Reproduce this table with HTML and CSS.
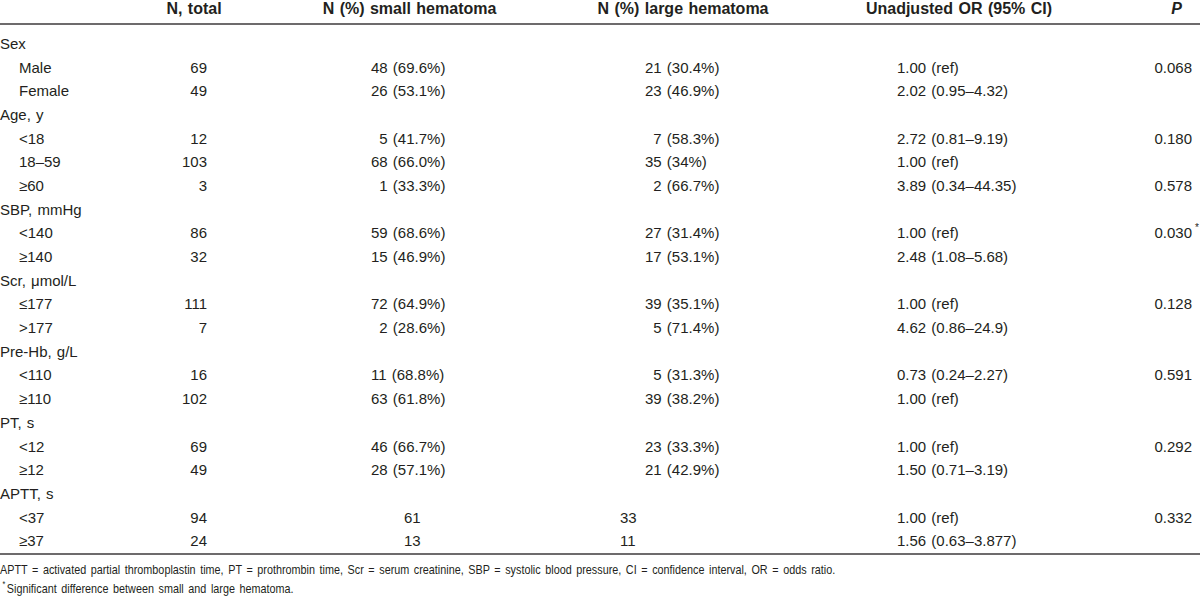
FILE: index.html
```html
<!DOCTYPE html>
<html>
<head>
<meta charset="utf-8">
<link rel="stylesheet" href="styles.css">
</head>
<body>
<table class="tbl">
  <colgroup>
    <col class="w1"><col class="w2"><col class="w3"><col class="w4"><col class="w5"><col class="w6">
  </colgroup>
  <thead>
    <tr>
      <th class="h1"></th>
      <th class="hc">N, total</th>
      <th class="hc">N (%) small hematoma</th>
      <th class="hc">N (%) large hematoma</th>
      <th class="hc">Unadjusted OR (95% CI)</th>
      <th class="hp"><i>P</i></th>
    </tr>
  </thead>
  <tbody>
    <tr class="first"><td class="lab">Sex</td><td></td><td></td><td></td><td></td><td></td></tr>
    <tr><td class="sub">Male</td><td class="n">69</td><td class="s">48 (69.6%)</td><td class="l">21 (30.4%)</td><td class="o">1.00 (ref)</td><td class="p">0.068</td></tr>
    <tr><td class="sub">Female</td><td class="n">49</td><td class="s">26 (53.1%)</td><td class="l">23 (46.9%)</td><td class="o">2.02 (0.95–4.32)</td><td class="p"></td></tr>
    <tr><td class="lab">Age, y</td><td></td><td></td><td></td><td></td><td></td></tr>
    <tr><td class="sub">&lt;18</td><td class="n">12</td><td class="s">&#8199;5 (41.7%)</td><td class="l">&#8199;7 (58.3%)</td><td class="o">2.72 (0.81–9.19)</td><td class="p">0.180</td></tr>
    <tr><td class="sub">18–59</td><td class="n">103</td><td class="s">68 (66.0%)</td><td class="l">35 (34%)</td><td class="o">1.00 (ref)</td><td class="p"></td></tr>
    <tr><td class="sub">≥60</td><td class="n">3</td><td class="s">&#8199;1 (33.3%)</td><td class="l">&#8199;2 (66.7%)</td><td class="o">3.89 (0.34–44.35)</td><td class="p">0.578</td></tr>
    <tr><td class="lab">SBP, mmHg</td><td></td><td></td><td></td><td></td><td></td></tr>
    <tr><td class="sub">&lt;140</td><td class="n">86</td><td class="s">59 (68.6%)</td><td class="l">27 (31.4%)</td><td class="o">1.00 (ref)</td><td class="p">0.030<sup class="star">*</sup></td></tr>
    <tr><td class="sub">≥140</td><td class="n">32</td><td class="s">15 (46.9%)</td><td class="l">17 (53.1%)</td><td class="o">2.48 (1.08–5.68)</td><td class="p"></td></tr>
    <tr><td class="lab">Scr, μmol/L</td><td></td><td></td><td></td><td></td><td></td></tr>
    <tr><td class="sub">≤177</td><td class="n">111</td><td class="s">72 (64.9%)</td><td class="l">39 (35.1%)</td><td class="o">1.00 (ref)</td><td class="p">0.128</td></tr>
    <tr><td class="sub">&gt;177</td><td class="n">7</td><td class="s">&#8199;2 (28.6%)</td><td class="l">&#8199;5 (71.4%)</td><td class="o">4.62 (0.86–24.9)</td><td class="p"></td></tr>
    <tr><td class="lab">Pre-Hb, g/L</td><td></td><td></td><td></td><td></td><td></td></tr>
    <tr><td class="sub">&lt;110</td><td class="n">16</td><td class="s">11 (68.8%)</td><td class="l">&#8199;5 (31.3%)</td><td class="o">0.73 (0.24–2.27)</td><td class="p">0.591</td></tr>
    <tr><td class="sub">≥110</td><td class="n">102</td><td class="s">63 (61.8%)</td><td class="l">39 (38.2%)</td><td class="o">1.00 (ref)</td><td class="p"></td></tr>
    <tr><td class="lab">PT, s</td><td></td><td></td><td></td><td></td><td></td></tr>
    <tr><td class="sub">&lt;12</td><td class="n">69</td><td class="s">46 (66.7%)</td><td class="l">23 (33.3%)</td><td class="o">1.00 (ref)</td><td class="p">0.292</td></tr>
    <tr><td class="sub">≥12</td><td class="n">49</td><td class="s">28 (57.1%)</td><td class="l">21 (42.9%)</td><td class="o">1.50 (0.71–3.19)</td><td class="p"></td></tr>
    <tr><td class="lab">APTT, s</td><td></td><td></td><td></td><td></td><td></td></tr>
    <tr><td class="sub">&lt;37</td><td class="n">94</td><td class="sc">61</td><td class="lc">33</td><td class="o">1.00 (ref)</td><td class="p">0.332</td></tr>
    <tr class="last"><td class="sub">≥37</td><td class="n">24</td><td class="sc">13</td><td class="lc">11</td><td class="o">1.56 (0.63–3.877)</td><td class="p"></td></tr>
  </tbody>
</table>
<div class="notes">
  <p class="note">APTT = activated partial thromboplastin time, PT = prothrombin time, Scr = serum creatinine, SBP = systolic blood pressure, CI = confidence interval, OR = odds ratio.</p>
  <p class="note"><sup class="fstar">*</sup>Significant difference between small and large hematoma.</p>
</div>
</body>
</html>
```
FILE: styles.css
```css
html, body {
  margin: 0;
  padding: 0;
  background: #ffffff;
}
body {
  font-family: "Liberation Sans", Arial, sans-serif;
  font-size: 15px;
  color: #231f20;
  word-spacing: 1px;
}
.tbl {
  border-collapse: collapse;
  table-layout: fixed;
  width: 1200px;
}
.w1 { width: 150px; }
.w2 { width: 88px; }
.w3 { width: 343px; }
.w4 { width: 204px; }
.w5 { width: 348px; }
.w6 { width: 67px; }
th {
  font-weight: bold;
  font-size: 16px;
  height: 23px;
  padding: 0;
  vertical-align: top;
  line-height: 18px;
  border-bottom: 2px solid #6d6b6c;
  white-space: nowrap;
}
.hc { text-align: center; }
th.hp { text-align: right; padding-right: 18px; }
td {
  padding: 0;
  height: 23.7px;
  line-height: 18px;
  white-space: nowrap;
  vertical-align: middle;
}
tr.first td { padding-top: 7px; }
tbody tr.last td { border-bottom: 2px solid #6d6b6c; }
.lab { text-align: left; }
.sub { text-align: left; padding-left: 19px; }
.n { text-align: right; padding-right: 31px; }
.s { text-align: left; padding-left: 133px; }
.l { text-align: left; padding-left: 64px; }
.sc { text-align: left; padding-left: 166px; }
.lc { text-align: left; padding-left: 39px; }
.o { text-align: left; padding-left: 112px; }
.p { text-align: right; padding-right: 8px; position: relative; }
.star {
  position: absolute;
  right: 1px;
  top: 1px;
  font-size: 10px;
  line-height: 10px;
}
.notes {
  padding-top: 5px;
}
.note {
  margin: 0;
  font-size: 13.5px;
  line-height: 19px;
  word-spacing: 2px;
  white-space: nowrap;
  transform: scaleX(0.8);
  transform-origin: left center;
}
.fstar {
  font-size: 9px;
  line-height: 0;
  vertical-align: 6px;
  margin-left: 3px;
  margin-right: 2px;
}
```
